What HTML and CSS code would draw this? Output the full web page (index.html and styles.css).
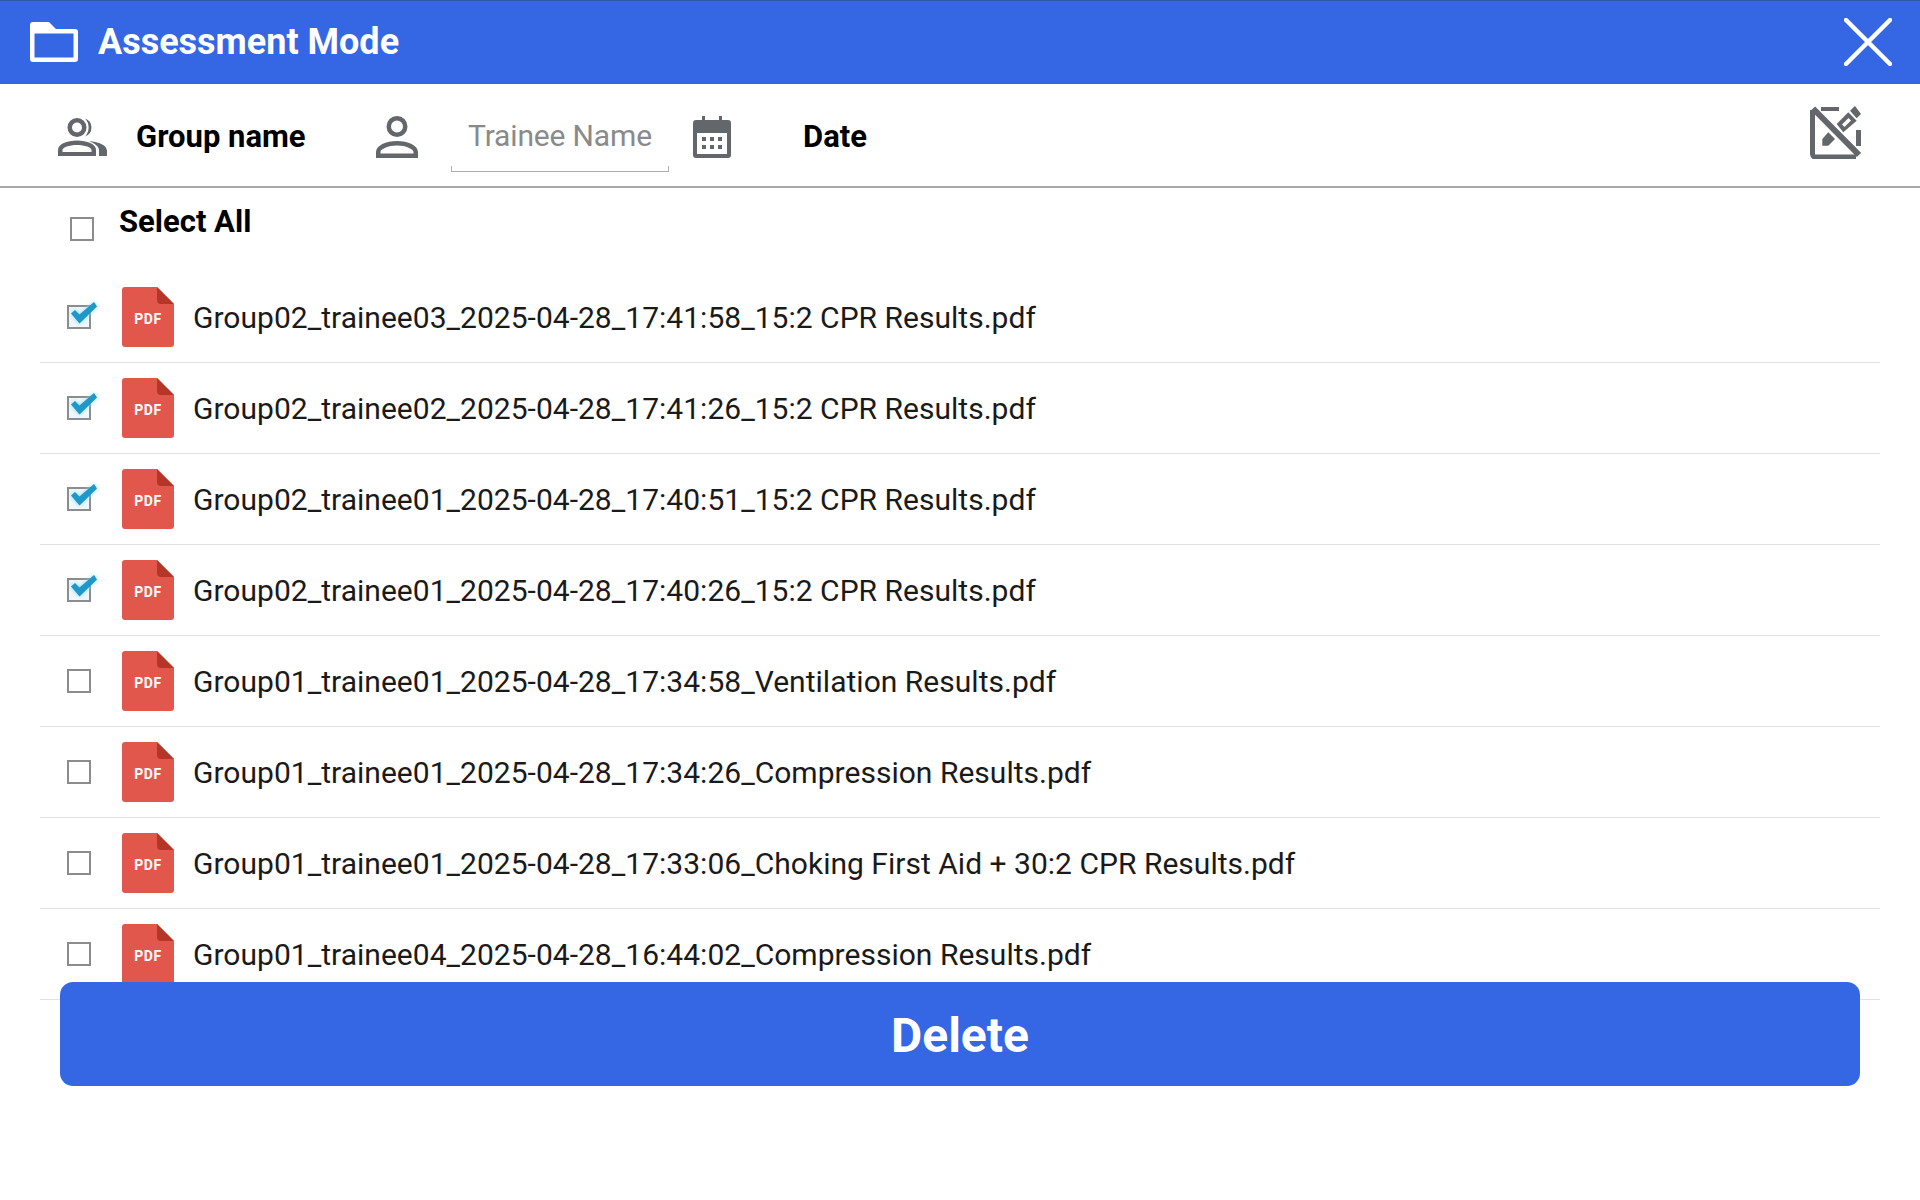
FILE: index.html
```html
<!DOCTYPE html>
<html lang="en">
<head>
<meta charset="utf-8">
<title>Assessment Mode</title>
<link rel="stylesheet" href="styles.css">
</head>
<body>
<svg class="defs" width="0" height="0" aria-hidden="true">
  <symbol id="pdf" viewBox="0 0 52 60">
    <path d="M3 0H35L52 17V57a3 3 0 0 1-3 3H3a3 3 0 0 1-3-3V3a3 3 0 0 1 3-3Z" fill="#e2574c"/>
    <path d="M35 0L52 17H39a4 4 0 0 1-4-4Z" fill="#b53629"/>
  </symbol>
  <symbol id="tick" viewBox="0 0 30 26">
    <path d="M2 14.500L6 11L10.500 15.500L25 3L28 7.500L10.500 24.500Z" fill="#1d98c9"/>
  </symbol>
</svg>
<div class="app">
  <header class="titlebar">
    <svg class="folder" viewBox="0 0 48 40"><path fill="#fff" fill-rule="evenodd" d="M3 0H19L26 7H45a3 3 0 0 1 3 3V37a3 3 0 0 1-3 3H3a3 3 0 0 1-3-3V3a3 3 0 0 1 3-3ZM4.500 11.500V35.500H43.500V11.500Z"/></svg>
    <h1 class="title">Assessment Mode</h1>
    <svg class="close" viewBox="0 0 48 48"><path d="M2 2L46 46M46 2L2 46" stroke="#fff" stroke-width="4.500" stroke-linecap="round"/></svg>
  </header>

  <section class="toolbar">
    <svg class="icon-group" viewBox="0 0 50 38">
      <path fill="#63666a" fill-rule="evenodd" d="M19 0a9.500 9.500 0 1 1 0 19a9.500 9.500 0 0 1 0-19Zm0 4.500a5 5 0 1 0 0 10a5 5 0 0 0 0-10ZM0 38V32c0-6 9-9.500 19-9.500S38 26 38 32v6ZM4.500 34H33.500V32c0-2.500-6.500-5-14.500-5S4.500 29.500 4.500 32Z"/>
      <path fill="#63666a" d="M27 .500a9.500 9.500 0 0 1 0 18a13 13 0 0 0 0-18ZM31 23C41 24 49 27 49 33v5H41V32c0-3.500-4-6.500-10-9Z"/>
    </svg>
    <span class="label group-label">Group name</span>
    <svg class="icon-person" viewBox="0 0 42 42">
      <path fill="#63666a" fill-rule="evenodd" d="M21 0a10.500 10.500 0 1 1 0 21a10.500 10.500 0 0 1 0-21Zm0 4.500a6 6 0 1 0 0 12a6 6 0 0 0 0-12ZM0 42V36c0-6.500 10-11 21-11s21 4.500 21 11v6ZM4.500 37.500H37.500V36c0-3-7.500-6.500-16.500-6.500S4.500 33 4.500 36Z"/>
    </svg>
    <div class="name-field"><input class="name-input" type="text" placeholder="Trainee Name"></div>
    <svg class="icon-cal" viewBox="0 0 38 42">
      <path fill="#63666a" fill-rule="evenodd" d="M9 0h3v4H26V0h3v4h6a3 3 0 0 1 3 3V39a3 3 0 0 1-3 3H3a3 3 0 0 1-3-3V7a3 3 0 0 1 3-3h6ZM4 17V38H34V17Z"/>
      <path fill="#63666a" d="M9 21h4v4H9ZM17 21h4v4H17ZM25 21h4v4H25ZM9 29h4v4H9ZM17 29h4v4H17ZM25 29h4v4H25Z"/>
    </svg>
    <span class="label date-label">Date</span>
    <svg class="icon-noedit" viewBox="0 0 51 53">
      <path d="M2.500 4V48a3 3 0 0 0 3 3H46" fill="none" stroke="#63666a" stroke-width="5"/>
      <path d="M3 2.500L49 49" fill="none" stroke="#63666a" stroke-width="6"/>
      <path fill="#63666a" d="M11 1H29V5H11ZM46 24H51V40H46ZM40 4.700L45 0L51 8L46.700 12.300ZM12.300 39.700V33L18.300 26.300L25 33L18.300 39.700Z"/>
      <path fill="#63666a" fill-rule="evenodd" d="M26.700 18L38.300 6.300L46.700 14.700L33.300 26.300ZM32 18.500L34.500 21L41 14.500L38.500 12Z"/>
    </svg>
  </section>

  <main class="content">
    <div class="select-all">
      <span class="box"></span>
      <span class="select-label">Select All</span>
    </div>
    <ul class="files">
      <li class="file"><span class="box on"><svg class="tick"><use href="#tick"/></svg></span><span class="pdf"><svg class="pdf-art"><use href="#pdf"/></svg><span class="pdf-tag">PDF</span></span><span class="fname">Group02_trainee03_2025-04-28_17:41:58_15:2 CPR Results.pdf</span></li>
      <li class="file"><span class="box on"><svg class="tick"><use href="#tick"/></svg></span><span class="pdf"><svg class="pdf-art"><use href="#pdf"/></svg><span class="pdf-tag">PDF</span></span><span class="fname">Group02_trainee02_2025-04-28_17:41:26_15:2 CPR Results.pdf</span></li>
      <li class="file"><span class="box on"><svg class="tick"><use href="#tick"/></svg></span><span class="pdf"><svg class="pdf-art"><use href="#pdf"/></svg><span class="pdf-tag">PDF</span></span><span class="fname">Group02_trainee01_2025-04-28_17:40:51_15:2 CPR Results.pdf</span></li>
      <li class="file"><span class="box on"><svg class="tick"><use href="#tick"/></svg></span><span class="pdf"><svg class="pdf-art"><use href="#pdf"/></svg><span class="pdf-tag">PDF</span></span><span class="fname">Group02_trainee01_2025-04-28_17:40:26_15:2 CPR Results.pdf</span></li>
      <li class="file"><span class="box"></span><span class="pdf"><svg class="pdf-art"><use href="#pdf"/></svg><span class="pdf-tag">PDF</span></span><span class="fname">Group01_trainee01_2025-04-28_17:34:58_Ventilation Results.pdf</span></li>
      <li class="file"><span class="box"></span><span class="pdf"><svg class="pdf-art"><use href="#pdf"/></svg><span class="pdf-tag">PDF</span></span><span class="fname">Group01_trainee01_2025-04-28_17:34:26_Compression Results.pdf</span></li>
      <li class="file"><span class="box"></span><span class="pdf"><svg class="pdf-art"><use href="#pdf"/></svg><span class="pdf-tag">PDF</span></span><span class="fname">Group01_trainee01_2025-04-28_17:33:06_Choking First Aid + 30:2 CPR Results.pdf</span></li>
      <li class="file"><span class="box"></span><span class="pdf"><svg class="pdf-art"><use href="#pdf"/></svg><span class="pdf-tag">PDF</span></span><span class="fname">Group01_trainee04_2025-04-28_16:44:02_Compression Results.pdf</span></li>
    </ul>
    <button class="delete" type="button">Delete</button>
  </main>
</div>
</body>
</html>
```
FILE: styles.css
```css
* { box-sizing: border-box; }
html, body { margin: 0; height: 100%; background: #fff; }
body { font-family: Roboto, "Liberation Sans", sans-serif; overflow: hidden; }
.defs { position: absolute; }
.app { width: 1920px; height: 1200px; display: flex; flex-direction: column; }

.titlebar {
  height: 84px; flex: none; display: flex; align-items: center;
  background: #3567e5; border-top: 1px solid #2f55ad;
  padding: 0 28px 0 30px;
}
.folder { width: 48px; height: 40px; flex: none; margin-top: -1px; }
.title { margin: -2px 0 0 20px; font-size: 36px; font-weight: 700; color: #fff; flex: 1; }
.close { width: 48px; height: 48px; flex: none; margin-top: -1px; }

.toolbar {
  height: 104px; flex: none; display: flex; align-items: center;
  padding: 0 59px 0 58px; border-bottom: 2px solid #a8a8a8;
}
.icon-group { width: 50px; height: 38px; flex: none; margin-top: 4px; }
.label { font-size: 31px; font-weight: 700; color: #000; margin-top: 3px; }
.group-label { margin-left: 28px; width: 240px; }
.icon-person { width: 42px; height: 42px; flex: none; margin-top: 4px; }
.name-field {
  width: 218px; height: 88px; margin-left: 33px; flex: none; align-self: flex-start;
  background:
    linear-gradient(#adadad, #adadad) left bottom / 1px 6px no-repeat,
    linear-gradient(#adadad, #adadad) right bottom / 1px 6px no-repeat,
    linear-gradient(#adadad, #adadad) left bottom / 100% 1px no-repeat;
}
.name-input {
  width: 100%; height: 100%; border: 0; padding: 15px 16px 0 17px; outline: 0; background: transparent;
  font: 400 30px Roboto, sans-serif; letter-spacing: -0.15px;
}
.name-input::placeholder { color: #8a8a8a; opacity: 1; }
.icon-cal { width: 38px; height: 42px; flex: none; margin: 4px 0 0 24px; }
.date-label { margin-left: 72px; flex: 1; }
.icon-noedit { width: 51px; height: 53px; flex: none; margin-top: -5px; }

.content { flex: 1; position: relative; padding: 0 40px; }
.select-all { height: 84px; display: flex; align-items: flex-start; padding: 29px 0 0 30px; }
.select-label { font-size: 31px; font-weight: 700; color: #000; margin-left: 25px; margin-top: -14px; }
.box {
  width: 24px; height: 24px; flex: none; border: 2px solid #8c8c8c; background: #fff; position: relative;
}
.box.on { background: #eef8fc; }
.tick { position: absolute; left: 0; top: -8px; width: 30px; height: 26px; filter: drop-shadow(0 0 2px #8fd6f2); }

.files { list-style: none; margin: 0; padding: 0; }
.file {
  height: 91px; display: flex; align-items: center; padding-left: 27px;
  border-bottom: 1px solid #e2e2e2;
}
.pdf { width: 52px; height: 60px; margin-left: 31px; flex: none; position: relative; display: block; }
.pdf-art { width: 52px; height: 60px; display: block; }
.pdf-tag { position: absolute; left: 0; right: 0; top: 23px; text-align: center; font: 700 14px/18px Roboto, sans-serif; color: #fff; letter-spacing: 0.6px; }
.fname { margin-left: 19px; font-size: 30px; color: #1a1a1a; letter-spacing: 0.02px; }

.delete {
  position: absolute; left: 60px; top: 794px; width: 1800px; height: 104px;
  border: 0; border-radius: 13px; background: #3567e5; color: #fff;
  font: 700 48px Roboto, sans-serif; padding: 2px 0 0;
}
```
